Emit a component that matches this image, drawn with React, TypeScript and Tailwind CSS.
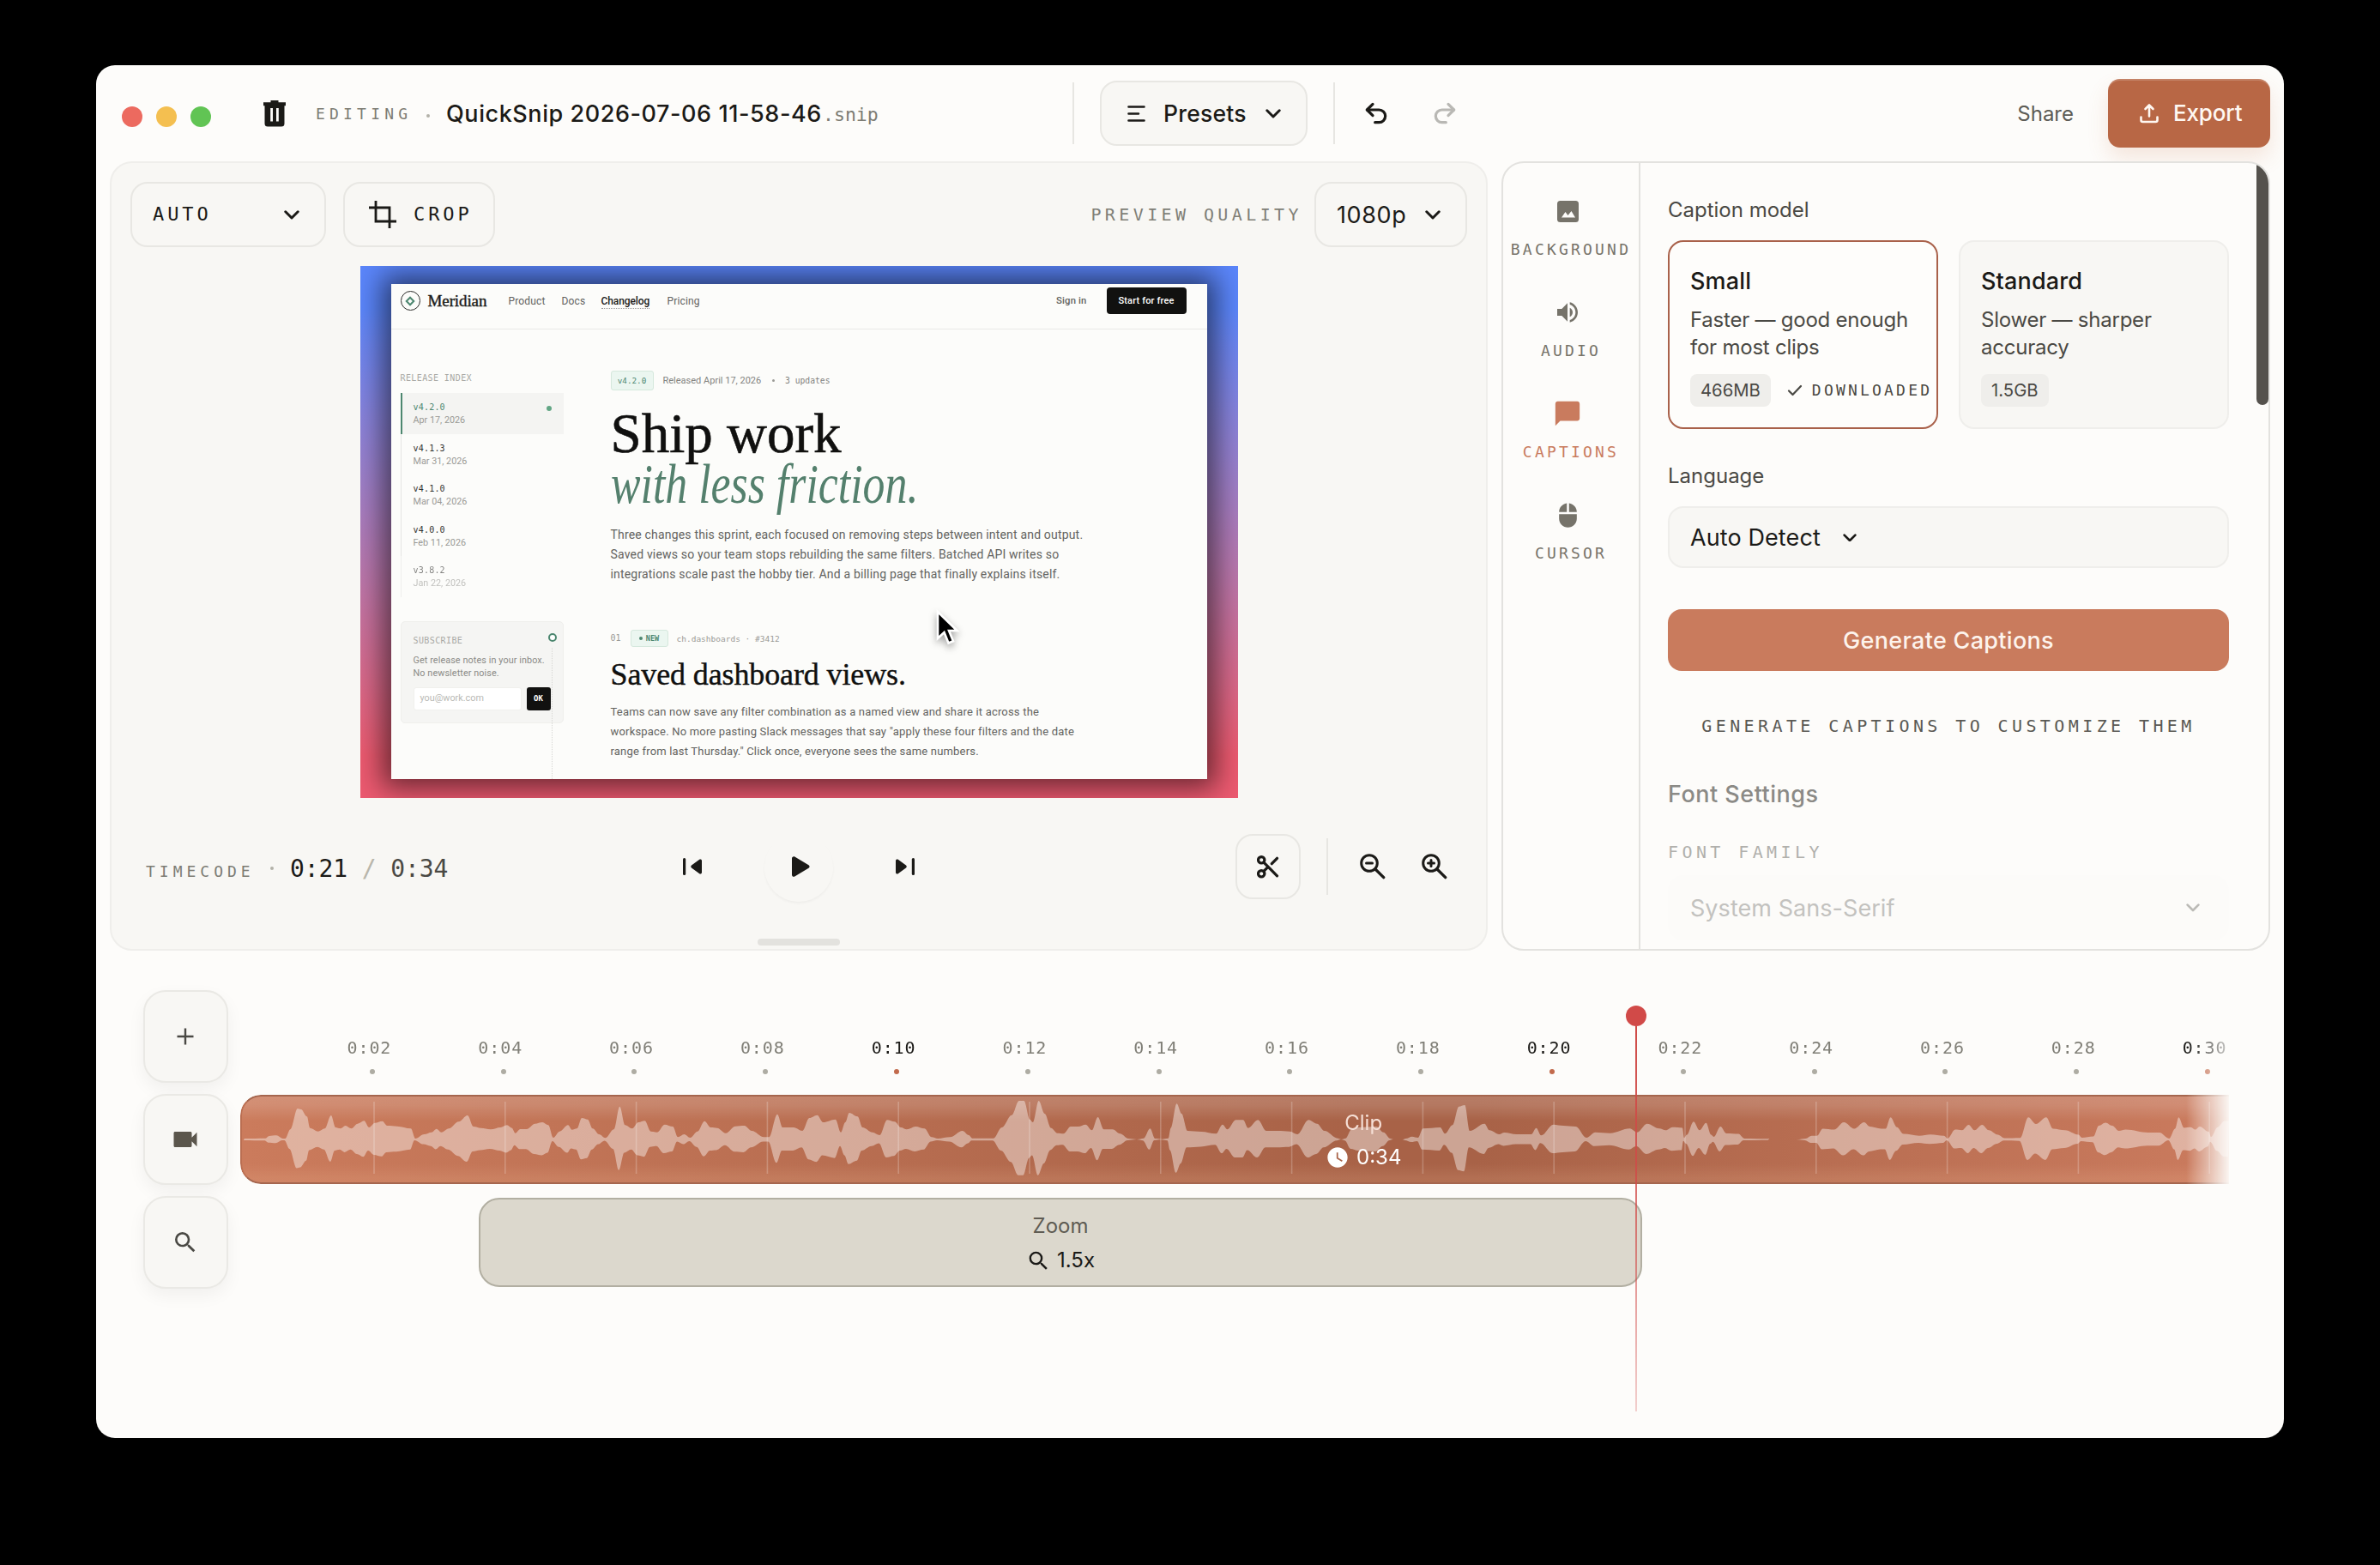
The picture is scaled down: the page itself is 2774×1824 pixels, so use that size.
import type { ReactNode } from "react";
import { Undo2, Redo2 } from "lucide-react";
import { MdVolumeUp, MdChatBubble, MdMouse, MdVideocam, MdSearch, MdWatchLater } from "react-icons/md";

function Chevron({ size = 18, className = "" }: { size?: number; className?: string }) {
  return (
    <svg width={size} height={(size * 11) / 18} viewBox="0 0 18 11" fill="none" className={className}>
      <path d="M1.8 1.8 9 9l7.2-7.2" stroke="currentColor" strokeWidth="3" strokeLinecap="round" strokeLinejoin="round" />
    </svg>
  );
}

function TrashIcon() {
  return (
    <svg width="28" height="31" viewBox="0 0 28 31" fill="#1b1a17">
      <path d="M9.5 0h9v2.2H27v4H1v-4h8.500z" />
      <path fillRule="evenodd" d="M2.500 5.500h23V27a3.500 3.500 0 0 1-3.500 3.500H6A3.500 3.500 0 0 1 2.500 27zM9.200 9v15.500h2.800V9zm6.800 0v15.500h2.800V9z" />
    </svg>
  );
}

function CropIcon() {
  return (
    <svg width="32" height="32" viewBox="0 0 32 32" fill="none" stroke="#1b1a17" strokeWidth="2.800">
      <path d="M8 0v24h24M0 8h24v24" />
    </svg>
  );
}

function SkipIcon({ flip = false }: { flip?: boolean }) {
  return (
    <svg width="22" height="20" viewBox="0 0 22 20" fill="#1b1a17" className={flip ? "-scale-x-100" : ""}>
      <rect x="0" y="0" width="3.200" height="20" rx="1.500" />
      <path d="M22 3.200v13.600c0 1.600-1.600 2.300-2.800 1.400l-9.200-6.800c-1-.8-1-2 0-2.800l9.200-6.800C20.400.9 22 1.600 22 3.200z" />
    </svg>
  );
}

function ScissorsIcon() {
  return (
    <svg width="26" height="27" viewBox="0 0 26 27" fill="none" stroke="#1b1a17" strokeWidth="3.200" strokeLinecap="round">
      <circle cx="5.200" cy="5.300" r="3.700" />
      <circle cx="5.200" cy="21.300" r="3.700" />
      <path d="M8 8.200 23.500 23.800M8 18.400l4.200-4.300M17.300 9.700l6.200-6.400" />
    </svg>
  );
}

function Magnifier({ plus = false }: { plus?: boolean }) {
  return (
    <svg width="30" height="30" viewBox="0 0 30 30" fill="none" stroke="#1b1a17" strokeWidth="3" strokeLinecap="round">
      <circle cx="11" cy="11" r="9.300" />
      <path d="m18 18 9.700 9.700" strokeWidth="3.300" />
      <path d={plus ? "M7.500 11h7M11 7.500v7" : "M7.500 11h7"} />
    </svg>
  );
}

function ExportIcon() {
  return (
    <svg width="24" height="24" viewBox="0 0 24 24" fill="none" stroke="#fff8f2" strokeWidth="2.600" strokeLinecap="round" strokeLinejoin="round">
      <path d="M12 15.500V3M7.500 7 12 2.500 16.500 7M2.500 16.500V20a2 2 0 0 0 2 2h15a2 2 0 0 0 2-2v-3.500" />
    </svg>
  );
}

function ImageIcon() {
  return (
    <svg width="25" height="25" viewBox="0 0 25 25">
      <rect width="25" height="25" rx="3.500" fill="#76736a" />
      <path d="M5 19.500 9.500 13l3 4 4-5 4.500 7.500z" fill="#fdfcfa" />
    </svg>
  );
}

function Tab({ icon, label, active = false }: { icon: ReactNode; label: string; active?: boolean }) {
  return (
    <div className={`flex h-[118px] flex-col items-center ${active ? "text-[#c97b5e]" : "text-[#76736a]"}`}>
      <div className="mr-2 flex h-[36px] items-center">{icon}</div>
      <div className="mt-[18px] font-['DejaVu_Sans_Mono',monospace] text-[18px] leading-none tracking-[3.200px]">{label}</div>
    </div>
  );
}

/* [x, half height] samples of the audio track, one list per third of the timeline */
const WAVE_A: number[][] = [[235,3],[278,4],[285,12],[300,14],[313,3],[318,3],[328,35],[343,108],[350,105],[362,80],[368,40],[385,28],[398,38],[411,84],[420,42],[430,38],[440,48],[452,38],[465,55],[478,65],[488,42],[500,58],[515,64],[525,48],[545,46],[573,38],[582,3],[600,18],[615,25],[625,37],[635,25],[650,38],[670,62],[688,84],[700,45],[715,40],[735,35],[755,42],[768,50],[778,40],[785,22],[795,36],[808,36],[825,55],[840,60],[852,50],[862,6],[875,28],[892,50],[900,34],[910,38],[920,75],[932,70],[942,38],[955,18],[968,5],[985,35],[997,115],[1008,50],[1022,38],[1035,60],[1048,65],[1060,28],[1073,25],[1088,52],[1105,45],[1115,8],[1128,18],[1140,6],[1155,28],[1169,64],[1182,42],[1195,40],[1212,22],[1232,46],[1250,48],[1265,30],[1290,8],[1300,8],[1317,88],[1328,42],[1350,42],[1368,30],[1382,75],[1398,85],[1410,60],[1435,70],[1446,25],[1455,60],[1463,93],[1480,80],[1490,42],[1510,25],[1525,15],[1540,68],[1555,62]];
const WAVE_B: number[][] = [[0,42],[12,35],[30,45],[48,38],[62,8],[75,3],[100,8],[125,30],[138,15],[145,4],[188,4],[205,42],[225,85],[240,135],[250,135],[262,70],[268,60],[280,135],[292,90],[305,40],[318,22],[330,20],[345,45],[360,45],[375,52],[388,32],[400,78],[412,35],[430,35],[445,20],[462,3],[480,0],[493,4],[506,38],[516,3],[530,1],[543,4],[548,40],[560,125],[570,90],[582,30],[610,27],[640,20],[653,52],[663,35],[680,68],[695,68],[705,40],[725,68],[742,30],[765,30],[790,28],[805,18],[828,68],[845,55],[860,30],[887,4],[895,0],[903,4],[915,35],[930,42],[965,45],[980,25],[994,3],[1000,0],[1020,0],[1025,3],[1038,10],[1050,6],[1060,38],[1095,42],[1105,20],[1120,50],[1133,115],[1145,120],[1155,30],[1185,55],[1195,32],[1215,18],[1225,24],[1250,18],[1280,18],[1290,40],[1300,14],[1325,52],[1345,48],[1370,45],[1392,6],[1410,25],[1440,22],[1480,38],[1495,25],[1515,55],[1540,38]];
const WAVE_C: number[][] = [[175,30],[190,40],[212,38],[216,5],[222,15],[237,58],[250,30],[265,54],[276,15],[282,8],[297,42],[310,20],[337,18],[350,3],[405,2],[406,0],[468,0],[487,3],[500,12],[512,12],[525,35],[550,32],[572,56],[595,35],[617,56],[630,42],[655,35],[665,35],[676,72],[690,40],[705,18],[740,12],[765,16],[795,12],[803,3],[820,32],[835,30],[850,48],[863,30],[880,48],[895,30],[915,15],[930,4],[965,5],[983,72],[1000,50],[1023,72],[1038,35],[1065,30],[1095,15],[1102,6],[1128,10],[1140,45],[1155,55],[1170,45],[1185,28],[1200,32],[1250,22],[1275,22],[1297,3],[1310,35],[1318,72],[1330,38],[1345,40],[1355,32],[1365,42],[1385,25],[1390,8],[1405,40],[1420,60],[1430,60]];

const wave: number[][] = [
  ...WAVE_A.map(([x, a]) => [150 + x / 1.742 - 280, a / 3]),
  ...WAVE_B.map(([x, a]) => [1050 + x / 1.742 - 280, a / 3]),
  ...WAVE_C.map(([x, a]) => [1850 + x / 1.912 - 280, a / 2.8]),
];

/* joins points with curves that are level at every sample */
function smooth(points: number[][]) {
  return points
    .map(([x, y], i) => {
      if (i === 0) return `${x.toFixed(1)} ${y.toFixed(1)}`;
      const [px, py] = points[i - 1];
      const c1 = px + (x - px) * 0.35;
      const c2 = px + (x - px) * 0.65;
      return `C${c1.toFixed(1)} ${py.toFixed(1)} ${c2.toFixed(1)} ${y.toFixed(1)} ${x.toFixed(1)} ${y.toFixed(1)}`;
    })
    .join("");
}

const wavePath =
  "M" + smooth(wave.map(([x, a]) => [x, 52 - a])) + "L" + smooth([...wave].reverse().map(([x, a]) => [x - 1, 52 + a * 0.93])) + "Z";

const ticks = Array.from({ length: 15 }, (_, i) => (i + 1) * 2);

const releases = [
  { v: "v4.2.0", d: "Apr 17, 2026" },
  { v: "v4.1.3", d: "Mar 31, 2026" },
  { v: "v4.1.0", d: "Mar 04, 2026" },
  { v: "v4.0.0", d: "Feb 11, 2026" },
  { v: "v3.8.2", d: "Jan 22, 2026" },
];

function MeridianPage() {
  return (
    <div className="flex h-[577px] w-[951px] flex-col overflow-hidden bg-[#fcfcfa] font-[Roboto,sans-serif] text-[#636360] shadow-[0_0_30px_10px_rgba(0,0,0,0.56)]">
      <div className="h-[53px] shrink-0 border-b border-[#e9e9e6]">
        <div className="flex h-[39px] items-center pl-[11px] text-[12px] leading-none tracking-[0.150px]">
          <div className="flex size-[23px] items-center justify-center rounded-full border-[1.500px] border-[#2a2a28]">
            <div className="size-[8px] rotate-45 border-2 border-[#4d8770]" />
          </div>
          <div className="ml-[9px] w-[94px] font-['Liberation_Serif',serif] text-[19px] tracking-[-0.100px] text-[#1b1b19] [-webkit-text-stroke:0.4px_#1b1b19]">Meridian</div>
          <div className="w-[62px]">Product</div>
          <div className="w-[46px]">Docs</div>
          <div className="w-[77px]">
            <span className="border-b border-dotted border-[#999] pb-px font-medium tracking-[-0.100px] text-[#1b1b19]">Changelog</span>
          </div>
          <div>Pricing</div>
          <div className="mr-[23px] ml-auto text-[11.300px] font-medium">Sign in</div>
          <div className="mr-6 flex h-[31px] w-[93px] items-center justify-center rounded-[4px] bg-[#111110] text-[11px] font-medium text-white">Start for free</div>
        </div>
      </div>
      <div className="flex flex-1">
        <div className="ml-[11px] w-[190px] pt-[52px]">
          <div className="font-['DejaVu_Sans_Mono',monospace] text-[10px] leading-none tracking-[0.400px] text-[#a9a9a5]">RELEASE INDEX</div>
          <div className="mt-[12px]">
            {releases.map((r, i) => (
              <div
                key={r.v}
                className={`flex h-[47.600px] justify-between pt-[12px] pr-[14px] leading-none ${
                  i === 0 ? "border-l-2 border-[#4d8770] bg-[#f4f4f2] pl-[13px]" : "border-l border-[#e6e6e3] pl-[14px]"
                } ${i === 4 ? "opacity-60" : ""}`}
              >
                <div>
                  <div className={`font-['DejaVu_Sans_Mono',monospace] text-[10px] tracking-[0.200px] ${i === 0 ? "text-[#4d8770]" : "text-[#333331]"}`}>{r.v}</div>
                  <div className="mt-[5px] text-[10.800px] text-[#9a9a96]">{r.d}</div>
                </div>
                {i === 0 && <div className="mt-[3px] size-[6px] rounded-full bg-[#62a685]" />}
              </div>
            ))}
          </div>
          <div className="relative mt-[28px] h-[119px] rounded-[5px] border border-[#efefec] bg-[#f5f5f3] pt-[17px] pl-[14px]">
            <div className="font-['DejaVu_Sans_Mono',monospace] text-[10px] leading-none tracking-[0.400px] text-[#a9a9a5]">SUBSCRIBE</div>
            <div className="mt-[10px] text-[10.800px] leading-[15px] tracking-[0.100px] text-[#8b8b87]">
              Get release notes in your inbox.
              <br />
              No newsletter noise.
            </div>
            <div className="mt-[9px] flex gap-[6px] leading-none">
              <div className="flex h-[27px] w-[126px] items-center rounded-[3px] border border-[#f0f0ed] bg-white pl-[7px] text-[10.800px] text-[#b9b9b5]">you@work.com</div>
              <div className="flex h-[27px] w-[28px] items-center justify-center rounded-[3px] bg-[#111110] font-['DejaVu_Sans_Mono',monospace] text-[9px] font-bold text-white">OK</div>
            </div>
            <div className="absolute top-[13px] right-[7px] size-[10px] rounded-full border-2 border-[#4d8770] bg-white" />
            <div className="absolute top-[30px] right-[12px] h-[155px] border-l border-dotted border-[#d6d6d3]" />
          </div>
        </div>
        <div className="ml-[55px] pt-[48px]">
          <div className="flex h-[23px] items-center leading-none">
            <div className="flex h-[23px] w-[50px] items-center justify-center rounded-[3px] border border-[#d5e8dd] bg-[#ebf6f0] font-['DejaVu_Sans_Mono',monospace] text-[9.300px] text-[#4d8770]">v4.2.0</div>
            <div className="ml-[11px] w-[127px] text-[11px] text-[#83837f]">Released April 17, 2026</div>
            <div className="size-[3.500px] rounded-full bg-[#9a9a96]" />
            <div className="ml-[12px] font-['DejaVu_Sans_Mono',monospace] text-[9.700px] text-[#83837f]">3 updates</div>
          </div>
          <div className="mt-[21px] font-['Liberation_Serif',serif] text-[65px] leading-[58.600px] text-[#10100f]">
            <div className="[-webkit-text-stroke:0.6px_#10100f]">Ship work</div>
            <div className="w-[460px] origin-left scale-x-[0.797] text-[#54806d] italic">with less friction.</div>
          </div>
          <div className="mt-[19px] text-[14px] leading-[22.700px] tracking-[0.180px]">
            <div>Three changes this sprint, each focused on removing steps between intent and output.</div>
            <div>Saved views so your team stops rebuilding the same filters. Batched API writes so</div>
            <div>integrations scale past the hobby tier. And a billing page that finally explains itself.</div>
          </div>
          <div className="mt-[54px] flex h-[20px] items-center font-['DejaVu_Sans_Mono',monospace] text-[9.500px] leading-none text-[#9a9a96]">
            <div className="w-[23px] text-[10px]">01</div>
            <div className="flex h-[20px] w-[44px] items-center justify-center gap-[4px] rounded-[3px] border border-[#d5e8dd] bg-[#ebf6f0] text-[8.500px] font-bold text-[#4d8770]">
              <div className="size-[4px] rounded-full bg-[#4d8770]" />
              NEW
            </div>
            <div className="ml-[10px]">ch.dashboards · #3412</div>
          </div>
          <div className="mt-[12px] font-['Liberation_Serif',serif] text-[36px] leading-[40px] tracking-[-0.120px] text-[#10100f] [-webkit-text-stroke:0.4px_#10100f]">Saved dashboard views.</div>
          <div className="mt-[13px] text-[13px] leading-[22.700px] tracking-[0.190px]">
            <div>Teams can now save any filter combination as a named view and share it across the</div>
            <div>workspace. No more pasting Slack messages that say "apply these four filters and the date</div>
            <div>range from last Thursday." Click once, everyone sees the same numbers.</div>
          </div>
        </div>
      </div>
    </div>
  );
}

function Header() {
  return (
    <div className="flex h-[112px] shrink-0 items-center leading-none">
      <div className="flex w-[1138px] items-center pl-[30px]">
        <div className="mt-2 flex gap-4">
          <div className="size-6 rounded-full bg-[#ec6a5f]" />
          <div className="size-6 rounded-full bg-[#f4bf50]" />
          <div className="size-6 rounded-full bg-[#61c454]" />
        </div>
        <div className="ml-[60px]">
          <TrashIcon />
        </div>
        <div className="mt-px ml-[34px] w-[129px] font-['DejaVu_Sans_Mono',monospace] text-[18px] tracking-[5.200px] text-[#7d7c74]">EDITING</div>
        <div className="mt-[5px] size-[4px] rounded-full bg-[#b3b1a8]" />
        <div className="ml-[19px] w-[439px] text-[27px] font-medium tracking-[0.570px]">QuickSnip 2026-07-06 11-58-46</div>
        <div className="mt-[4px] font-['DejaVu_Sans_Mono',monospace] text-[21.500px] text-[#7d7c74]">.snip</div>
      </div>
      <div className="h-[72px] w-[2px] bg-[#e7e6e2]" />
      <div className="ml-[30px] flex h-[76px] w-[242px] items-center rounded-[20px] border-2 border-[#e8e7e3] bg-[#f8f7f4] pl-[30px]">
        <svg width="21" height="19" viewBox="0 0 21 19" stroke="#1b1a17" strokeWidth="2.600" strokeLinecap="round">
          <path d="M1.500 1.500h18M1.500 9.500h11.500M1.500 17.500h18" />
        </svg>
        <div className="ml-[21px] w-[119px] text-[26.500px] font-medium tracking-[0.200px]">Presets</div>
        <Chevron />
      </div>
      <div className="ml-[30px] h-[72px] w-[2px] bg-[#e7e6e2]" />
      <div className="ml-[32px] flex gap-[48px]">
        <Undo2 size={32} strokeWidth={2.4} />
        <Redo2 size={32} strokeWidth={2.4} color="#b9b8b4" />
      </div>
      <div className="mt-px ml-auto text-[24px] text-[#5d5c56]">Share</div>
      <div className="mr-4 ml-[40px] flex h-[80px] w-[189px] items-center rounded-[14px] bg-[#b86745] pl-[36px] text-[26px] font-medium text-[#fff8f2] shadow-[inset_0_2px_0_rgba(255,255,255,0.18),0_12px_24px_rgba(200,110,70,0.16)]">
        <ExportIcon />
        <div className="ml-[16px] tracking-[-0.150px]">Export</div>
      </div>
    </div>
  );
}

function PreviewPanel() {
  return (
    <div className="flex h-[920px] w-[1606px] flex-col items-center rounded-[26px] border-2 border-[#efeeeb] bg-[#f8f7f4] px-[22px] pt-[22px] leading-none">
      <div className="flex h-[76px] w-full items-center">
        <div className="flex h-[76px] w-[228px] items-center justify-between rounded-[20px] border-2 border-[#e8e7e3] pr-[29px] pl-[24px]">
          <div className="font-['DejaVu_Sans_Mono',monospace] text-[22px] tracking-[3.900px]">AUTO</div>
          <Chevron />
        </div>
        <div className="ml-[20px] flex h-[76px] w-[177px] items-center rounded-[20px] border-2 border-[#e8e7e3] pl-[28px]">
          <CropIcon />
          <div className="ml-[20px] font-['DejaVu_Sans_Mono',monospace] text-[22px] tracking-[3.900px]">CROP</div>
        </div>
        <div className="mr-[14px] ml-auto font-['DejaVu_Sans_Mono',monospace] text-[20px] tracking-[4.400px] text-[#807f77]">PREVIEW QUALITY</div>
        <div className="flex h-[76px] w-[178px] items-center justify-between rounded-[20px] border-2 border-[#e8e7e3] pr-[29px] pl-[24px]">
          <div className="text-[27px] tracking-[0.600px]">1080p</div>
          <Chevron />
        </div>
      </div>
      <div className="relative mt-[22px] h-[620px] w-[1023px] overflow-hidden bg-linear-to-b from-[#5b86fb] from-8% to-[#ec5a70] to-92% pt-[21px] pl-[36px]">
        <MeridianPage />
        <svg width="40" height="54" viewBox="0 0 40 54" className="absolute top-[396px] left-[665px] drop-shadow-[0_4px_4px_rgba(0,0,0,0.35)]">
          <path d="M8 7v31l7.500-7 5 12.500 5.500-2.300-5-12.200h9.500z" fill="#000" stroke="#fff" strokeWidth="2.600" />
        </svg>
      </div>
      <div className="mt-[42px] flex h-[76px] w-full items-center">
        <div className="flex flex-1 items-baseline pr-[5px] pl-[18px] font-['DejaVu_Sans_Mono',monospace]">
          <div className="w-[145px] text-[18px] tracking-[5px] text-[#7d7c74]">TIMECODE</div>
          <div className="mr-[19px] size-[4px] -translate-y-[8px] rounded-full bg-[#b3b1a8]" />
          <div className="pt-[5px] text-[28px] tracking-[-0.100px] whitespace-pre">
            0:21<span className="text-[#b9b6ab]"> / </span>
            <span className="text-[#4a4944]">0:34</span>
          </div>
        </div>
        <div className="flex items-center gap-[73px]">
          <SkipIcon />
          <div className="mt-[2px] flex size-[80px] items-center justify-center rounded-full pb-[2px] pl-1 shadow-[0_2px_3px_rgba(0,0,0,0.04)]">
            <svg width="21" height="24" viewBox="0 0 21 24" fill="#1b1a17">
              <path d="M0 2.500C0 .6 1.800-.4 3.300.5l16.200 9.800c1.400.8 1.400 2.600 0 3.400L3.300 23.500C1.800 24.400 0 23.400 0 21.500z" />
            </svg>
          </div>
          <SkipIcon flip />
        </div>
        <div className="flex flex-1 items-center justify-end pr-[23px]">
          <div className="flex size-[76px] items-center justify-center rounded-[20px] border-2 border-[#e8e7e3]">
            <ScissorsIcon />
          </div>
          <div className="mr-[37px] ml-[30px] h-[66px] w-[2px] bg-[#e7e6e2]" />
          <Magnifier />
          <div className="w-[42px]" />
          <Magnifier plus />
        </div>
      </div>
      <div className="mt-[46px] h-[8px] w-[96px] rounded-full bg-[#e3e2de]" />
    </div>
  );
}

function ModelCard({ name, a, b, size, active = false }: { name: string; a: string; b: string; size: string; active?: boolean }) {
  return (
    <div className={`h-[220px] w-[315px] rounded-[18px] border-2 pl-[24px] ${active ? "border-[#a9614a] bg-[#fefdfb]" : "border-[#efeeeb] bg-[#f8f7f4]"}`}>
      <div className="mt-[32px] text-[27px] leading-none font-medium tracking-[0.150px]">{name}</div>
      <div className="mt-[16px] text-[24px] leading-[32px] tracking-[-0.230px] text-[#4a4944]">
        {a}
        <br />
        {b}
      </div>
      <div className="mt-[15px] flex items-center">
        <div className="flex h-[38px] items-center rounded-[8px] bg-[#efeeeb] px-[12px] text-[20.300px] text-[#4a4944]">{size}</div>
        {active && (
          <>
            <svg width="18" height="14" viewBox="0 0 18 14" fill="none" stroke="#4a4944" strokeWidth="2.200" strokeLinecap="round" strokeLinejoin="round" className="ml-[19px]">
              <path d="m2 7.500 4.500 4.500L16 2" />
            </svg>
            <div className="ml-[11px] font-['DejaVu_Sans_Mono',monospace] text-[18px] tracking-[3.200px] text-[#4a4944]">DOWNLOADED</div>
          </>
        )}
      </div>
    </div>
  );
}

function SettingsPanel() {
  return (
    <div className="relative ml-4 flex h-[920px] w-[896px] overflow-hidden rounded-[26px] border-2 border-[#e3e2df] bg-[#fdfcfa] leading-none">
      <div className="w-[160px] shrink-0 border-r-2 border-[#e3e2df] pt-[38px]">
        <Tab icon={<ImageIcon />} label="BACKGROUND" />
        <Tab icon={<MdVolumeUp size={32} />} label="AUDIO" />
        <Tab icon={<MdChatBubble size={34} />} label="CAPTIONS" active />
        <Tab icon={<MdMouse size={31} />} label="CURSOR" />
      </div>
      <div className="ml-[32px] flex w-[654px] flex-col">
        <div className="mt-[43px] text-[24px] text-[#4a4944]">Caption model</div>
        <div className="mt-[23px] flex gap-[24px]">
          <ModelCard name="Small" a="Faster — good enough" b="for most clips" size="466MB" active />
          <ModelCard name="Standard" a="Slower — sharper" b="accuracy" size="1.5GB" />
        </div>
        <div className="mt-[43px] text-[24px] text-[#4a4944]">Language</div>
        <div className="mt-[23px] flex h-[72px] items-center rounded-[18px] border-2 border-[#efeeeb] bg-[#f8f7f4] pt-px pl-[24px]">
          <div className="w-[178px] text-[27px] tracking-[0.100px]">Auto Detect</div>
          <Chevron size={16} />
        </div>
        <div className="mt-[48px] flex h-[72px] items-center justify-center rounded-[16px] bg-[#c97b5d] pt-px text-[27px] font-medium tracking-[0.300px] text-[#fdf3ec]">Generate Captions</div>
        <div className="mt-[54px] text-center font-['DejaVu_Sans_Mono',monospace] text-[20px] tracking-[4.400px] text-[#5a5954]">GENERATE CAPTIONS TO CUSTOMIZE THEM</div>
        <div className="mt-[56px] text-[27px] font-medium tracking-[0.500px] text-[#8b8a86]">Font Settings</div>
        <div className="mt-[44px] font-['DejaVu_Sans_Mono',monospace] text-[20px] tracking-[4.400px] text-[#b1b0ac]">FONT FAMILY</div>
        <div className="mt-[17px] flex h-[76px] items-center justify-between rounded-[18px] border-2 border-[#fcfbf9] bg-[#fcfbf9] pr-[32px] pl-[24px] text-[#c3c2bf]">
          <div className="text-[27px] tracking-[0.050px]">System Sans-Serif</div>
          <Chevron size={16} className="text-[#bcbbb7]" />
        </div>
      </div>
      <div className="absolute top-0 right-0 h-[282px] w-[14px] rounded-b-full bg-[#55524d]" />
    </div>
  );
}

function TrackButton({ children, size }: { children: ReactNode; size: string }) {
  return (
    <div className={`flex w-[99px] items-center justify-center rounded-[26px] border-2 border-[#eae9e5] bg-[#f8f7f4] pr-px text-[#4a4944] shadow-[0_8px_20px_rgba(0,0,0,0.05)] ${size}`}>
      {children}
    </div>
  );
}

function Timeline() {
  return (
    <div className="relative flex flex-1 pt-[46px] pl-[55px] leading-none">
      <div className="flex w-[98px] flex-col">
        <TrackButton size="h-[108px]">
          <svg width="20" height="20" viewBox="0 0 20 20" stroke="#4a4944" strokeWidth="2.400">
            <path d="M10 .5v19M.5 10h19" />
          </svg>
        </TrackButton>
        <TrackButton size="mt-[13px] h-[106px]">
          <MdVideocam size={36} color="#5b564c" />
        </TrackButton>
        <TrackButton size="mt-[13px] h-[108px]">
          <MdSearch size={32} />
        </TrackButton>
      </div>
      <div className="ml-[15px] w-[2318px]">
        <div className="flex h-[121.500px] overflow-hidden pt-[57px] pl-[74px] mask-[linear-gradient(to_right,black_0,black_2270px,transparent_2330px)]">
          {ticks.map((t) => {
            const major = t % 10 === 0;
            return (
              <div key={t} className="flex w-[152.800px] shrink-0 flex-col items-center">
                <div className={`font-['DejaVu_Sans_Mono',monospace] text-[20px] tracking-[0.900px] ${major ? "text-[#1b1a17]" : "text-[#807f77]"}`}>0:{String(t).padStart(2, "0")}</div>
                <div className={`mt-[15px] ml-[7px] size-[6px] rounded-full ${major ? "bg-[#c26a4c]" : "bg-[#aeaca3]"}`} />
              </div>
            );
          })}
        </div>
        <div className="relative h-[104.500px] overflow-hidden rounded-l-[24px] border-y-2 border-l-2 border-y-[#a5664e] border-l-[#bb6f52] bg-[linear-gradient(to_bottom,rgba(255,255,255,0.17),rgba(255,255,255,0.14)_10%,rgba(255,255,255,0)_28%,rgba(255,255,255,0)_78%,rgba(255,210,170,0.12)_95%),linear-gradient(to_right,#cb7b5c_0%,#a86247_57%,#a86247_62%,#cb7b5e_100%)] mask-[linear-gradient(to_right,black_0,black_2268px,rgba(0,0,0,0.06)_2318px)]">
          <svg width="2318" height="104" viewBox="0 0 2318 104" className="absolute -top-[2px] -left-[2px]">
            <path d={wavePath} fill="#fff" fillOpacity="0.42" strokeLinejoin="round" />
            {ticks.map((t, i) => (
              <rect key={t} x={155.2 + i * 152.8} y="8" width="1.600" height="84" fill="#fff" fillOpacity="0.22" />
            ))}
          </svg>
          <div className="absolute top-[19px] left-[1263px] flex flex-col items-center text-[24px]">
            <div className="w-full text-center text-[#f5dfd6]">Clip</div>
            <div className="mt-[16px] flex items-center text-white">
              <MdWatchLater size={28} className="-my-[2px] -mr-[2px]" />
              <div className="ml-[10px]">0:34</div>
            </div>
          </div>
        </div>
        <div className="mt-[16px] ml-[278px] flex h-[104px] w-[1356px] flex-col items-center rounded-[24px] border-2 border-[#b2afa2] bg-[#dcd8cd] pt-[19px] text-[24px]">
          <div className="text-[#5f5c53]">Zoom</div>
          <div className="mt-[16px] flex items-center">
            <MdSearch size={29} className="-my-[3px]" />
            <div className="ml-[7px]">1.5x</div>
          </div>
        </div>
      </div>
      <div className="absolute top-[64px] left-[1783px] flex flex-col items-center">
        <div className="size-[24px] rounded-full bg-[#d14a48]" />
        <div className="h-[449px] w-[2px] bg-[linear-gradient(to_bottom,#cf4a46_0%,rgba(209,74,72,0.8)_40%,rgba(209,74,72,0.25)_100%)]" />
      </div>
    </div>
  );
}

export default function App() {
  return (
    <div className="h-[1824px] w-[2774px] overflow-hidden bg-black pt-[76px] pl-[112px] font-[Inter,sans-serif] whitespace-nowrap text-[#1b1a17]">
      <div className="flex h-[1600px] w-[2550px] flex-col overflow-hidden rounded-[22px] bg-[#fdfcfa]">
        <Header />
        <div className="flex pl-4">
          <PreviewPanel />
          <SettingsPanel />
        </div>
        <Timeline />
      </div>
    </div>
  );
}
